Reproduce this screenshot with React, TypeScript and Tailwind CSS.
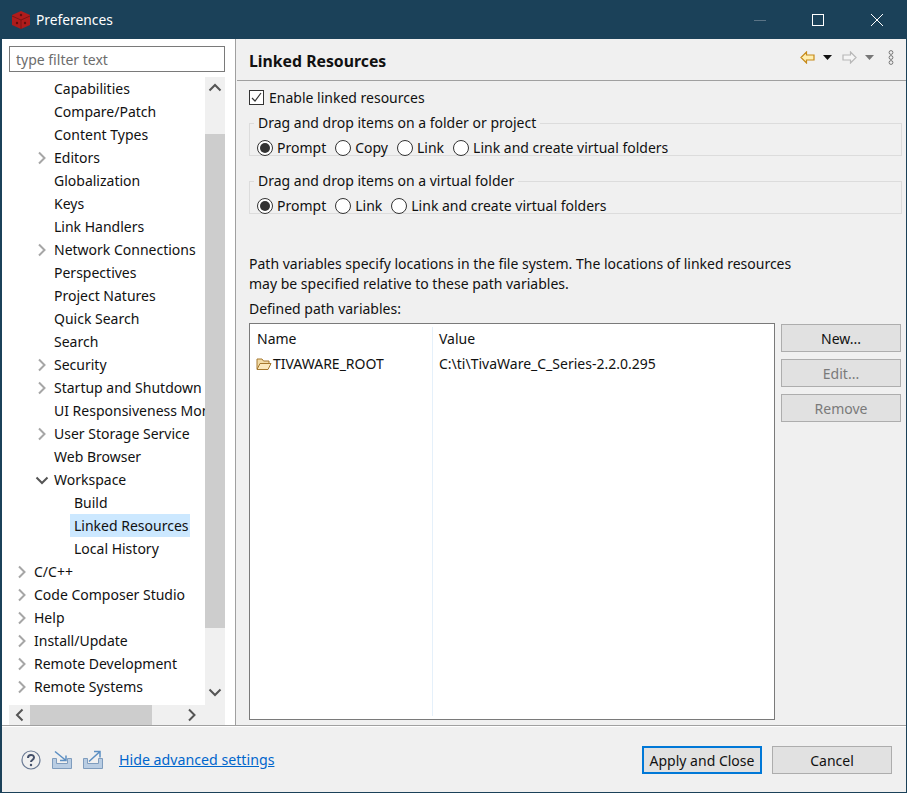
import { ReactNode } from "react";

type TreeRow = { label: string; level: number; arrow?: "right" | "down"; selected?: boolean };

const treeRows: TreeRow[] = [
    { label: "Capabilities", level: 1 },
    { label: "Compare/Patch", level: 1 },
    { label: "Content Types", level: 1 },
    { label: "Editors", level: 1, arrow: "right" },
    { label: "Globalization", level: 1 },
    { label: "Keys", level: 1 },
    { label: "Link Handlers", level: 1 },
    { label: "Network Connections", level: 1, arrow: "right" },
    { label: "Perspectives", level: 1 },
    { label: "Project Natures", level: 1 },
    { label: "Quick Search", level: 1 },
    { label: "Search", level: 1 },
    { label: "Security", level: 1, arrow: "right" },
    { label: "Startup and Shutdown", level: 1, arrow: "right" },
    { label: "UI Responsiveness Monitoring", level: 1 },
    { label: "User Storage Service", level: 1, arrow: "right" },
    { label: "Web Browser", level: 1 },
    { label: "Workspace", level: 1, arrow: "down" },
    { label: "Build", level: 2 },
    { label: "Linked Resources", level: 2, selected: true },
    { label: "Local History", level: 2 },
    { label: "C/C++", level: 0, arrow: "right" },
    { label: "Code Composer Studio", level: 0, arrow: "right" },
    { label: "Help", level: 0, arrow: "right" },
    { label: "Install/Update", level: 0, arrow: "right" },
    { label: "Remote Development", level: 0, arrow: "right" },
    { label: "Remote Systems", level: 0, arrow: "right" }
];

const Chevron = ({ dir, color = "#a6a6a6" }: { dir: "right" | "down" | "left" | "up"; color?: string }) => {
    const points = {
        right: "4,1.5 9.500,7 4,12.500",
        left: "9.500,1.5 4,7 9.500,12.500",
        down: "1.5,4.500 7,10 12.500,4.500",
        up: "1.5,9.500 7,4 12.500,9.500"
    }[dir];
    return (
        <svg width="14" height="14" viewBox="0 0 14 14" fill="none">
            <polyline points={points} stroke={color} strokeWidth="2" />
        </svg>
    );
};

const Radio = ({ label, checked }: { label: string; checked?: boolean }) => (
    <label className="flex items-center gap-[4px]">
        <span className="flex h-[16px] w-[16px] items-center justify-center rounded-full border border-[#333] bg-white">
            {checked && <span className="h-[10px] w-[10px] rounded-full bg-[#333]" />}
        </span>
        <span>{label}</span>
    </label>
);

const Group = ({ title, children }: { title: string; children: ReactNode }) => (
    <fieldset className="mr-[4px] h-[42px] border border-[#dcdcdc] pl-[7px]">
        <legend className="-ml-[3px] px-[4px] leading-[18px]">{title}</legend>
        <div className="mt-[5px] flex gap-[9px]">{children}</div>
    </fieldset>
);

const SideButton = ({ label, disabled }: { label: string; disabled?: boolean }) => (
    <button
        className={
            "h-[28px] w-[120px] border border-[#adadad] bg-[#e1e1e1] " +
            (disabled ? "text-[#7a7a7a]" : "text-[#111]")
        }
    >
        {label}
    </button>
);

const ImportIcon = () => (
    <svg width="22" height="20" viewBox="0 0 22 20" fill="none">
        <path d="M1.500 8.500v10h19v-10h-4v5h-11v-5z" fill="#b9cde3" stroke="#7f9cbd" />
        <path d="M4 1.500l11 9M15 5.500v5h-6" stroke="#5b8ec2" strokeWidth="1.5" />
    </svg>
);

const ExportIcon = () => (
    <svg width="22" height="20" viewBox="0 0 22 20" fill="none">
        <path d="M1.500 8.500v10h19v-10h-4v5h-11v-5z" fill="#b9cde3" stroke="#7f9cbd" />
        <path d="M7 11.500L18 1.500M12 1.500h6v6" stroke="#5b8ec2" strokeWidth="1.5" />
    </svg>
);

const Tree = () => (
    <div className="w-[196px] shrink-0 overflow-hidden pb-[7px]">
        {treeRows.map(row => (
            <div key={row.label} className="relative h-[23px] leading-[23px] whitespace-nowrap">
                {row.arrow && (
                    <span
                        className={
                            row.level === 0
                                ? "absolute top-[5px] left-[6px]"
                                : "absolute top-[5px] left-[26px]"
                        }
                    >
                        <Chevron dir={row.arrow} color={row.arrow === "down" ? "#555" : "#a6a6a6"} />
                    </span>
                )}
                <span
                    className={
                        row.level === 0
                            ? "ml-[25px]"
                            : row.level === 1
                              ? "ml-[45px]"
                              : row.selected
                                ? "ml-[61px] inline-block bg-[#cce8ff] pr-[2px] pl-[4px]"
                                : "ml-[65px]"
                    }
                >
                    {row.label}
                </span>
            </div>
        ))}
    </div>
);

export default function App() {
    return (
        <div
            className="flex h-[793px] w-[907px] flex-col border-t border-r border-b border-l-2 border-[#1b4159] bg-[#f0f0f0] text-[14px] text-[#111]"
            style={{ fontFamily: '"Noto Sans", sans-serif' }}
        >
            {/* title bar */}
            <header className="flex h-[38px] shrink-0 items-center bg-[#1b4159] text-white">
                <svg className="ml-[9px]" width="20" height="20" viewBox="0 0 20 20">
                    <path d="M10 1l9 4v10l-9 4-9-4V5z" fill="#b01c1c" />
                    <path d="M1 6l9 4 9-4M10 10v9" stroke="#7a1414" strokeWidth="1" fill="none" />
                    <circle cx="10" cy="5" r="1.2" fill="#5e1010" />
                    <circle cx="6" cy="13" r="1.2" fill="#5e1010" />
                    <circle cx="14" cy="13" r="1.2" fill="#5e1010" />
                </svg>
                <span className="ml-[5px] pt-px text-[13.8px]">Preferences</span>
                <div className="ml-auto flex items-center">
                    <span className="mr-[46px] h-px w-[12px] bg-[#5b7486]" />
                    <span className="mr-[47px] h-[12px] w-[12px] border border-white" />
                    <svg className="mr-[23px]" width="12" height="12" viewBox="0 0 12 12">
                        <path d="M0 0l12 12M12 0L0 12" stroke="#fff" strokeWidth="1" />
                    </svg>
                </div>
            </header>

            <div className="flex h-[687px] shrink-0 border-b border-[#a0a0a0]">
                {/* left side */}
                <aside className="flex w-[233px] shrink-0 flex-col bg-white px-[7px]">
                    <input
                        readOnly
                        placeholder="type filter text"
                        className="mt-[7px] h-[26px] w-[216px] shrink-0 border border-[#7a7a7a] px-[6px] placeholder:text-[#6d6d6d]"
                    />
                    <div className="mt-[5px] flex flex-1 flex-col overflow-hidden">
                        <div className="flex min-h-0 flex-1">
                            <Tree />
                            <div className="flex w-[20px] shrink-0 flex-col bg-[#f0f0f0]">
                                <div className="flex h-[57px] shrink-0 justify-center pt-[4px]">
                                    <Chevron dir="up" color="#555" />
                                </div>
                                <div className="h-[494px] shrink-0 bg-[#cdcdcd]" />
                                <div className="flex flex-1 items-end justify-center pb-[6px]">
                                    <Chevron dir="down" color="#555" />
                                </div>
                            </div>
                        </div>
                        <div className="flex h-[20px] w-[216px] shrink-0 bg-[#f0f0f0]">
                            <div className="flex w-[21px] shrink-0 items-center justify-center">
                                <Chevron dir="left" color="#555" />
                            </div>
                            <div className="h-full w-[122px] bg-[#cdcdcd]" />
                            <div className="ml-[33px] flex items-center">
                                <Chevron dir="right" color="#555" />
                            </div>
                        </div>
                    </div>
                </aside>

                {/* right side */}
                <main className="flex min-w-0 flex-1 flex-col border-l border-[#a0a0a0] pl-[1px]">
                    <div className="flex h-[42px] shrink-0 items-center border-b border-[#a0a0a0] pl-[12px]">
                        <h1 className="pt-[5px] text-[15.8px] font-bold">Linked Resources</h1>
                        <div className="ml-auto flex items-center pb-[5px]">
                            <svg width="15" height="13" viewBox="0 0 15 13">
                                <path d="M1 6.500L6.500 1v3H14v5H6.500v3z" fill="#ffeeb0" stroke="#c68a1a" strokeWidth="1.2" />
                            </svg>
                            <svg className="ml-[8px]" width="9" height="5" viewBox="0 0 9 5">
                                <path d="M0 0h9L4.500 5z" fill="#111" />
                            </svg>
                            <svg className="ml-[10px]" width="15" height="13" viewBox="0 0 15 13">
                                <path d="M14 6.500L8.500 1v3H1v5h7.500v3z" fill="#f5f5f5" stroke="#b8b8b8" strokeWidth="1.2" />
                            </svg>
                            <svg className="ml-[8px]" width="9" height="5" viewBox="0 0 9 5">
                                <path d="M0 0h9L4.500 5z" fill="#777" />
                            </svg>
                            <svg className="mr-[12px] ml-[14px]" width="6" height="15" viewBox="0 0 6 15" fill="none">
                                <circle cx="3" cy="2.500" r="1.900" stroke="#777" />
                                <circle cx="3" cy="7.500" r="1.900" stroke="#777" />
                                <circle cx="3" cy="12.500" r="1.900" stroke="#777" />
                            </svg>
                        </div>
                    </div>

                    <div className="flex min-h-0 flex-1 flex-col pl-[12px]">
                        <label className="mt-[6px] flex h-[20px] items-center gap-[5px]">
                            <span className="flex h-[15px] w-[15px] items-center justify-center border border-[#333] bg-white">
                                <svg width="11" height="11" viewBox="0 0 11 11" fill="none">
                                    <path d="M1 6l3 3 6-8" stroke="#333" strokeWidth="1.2" />
                                </svg>
                            </span>
                            Enable linked resources
                        </label>
                        <div className="mt-[7px] flex flex-col gap-[16px]">
                            <Group title="Drag and drop items on a folder or project">
                                <Radio label="Prompt" checked />
                                <Radio label="Copy" />
                                <Radio label="Link" />
                                <Radio label="Link and create virtual folders" />
                            </Group>
                            <Group title="Drag and drop items on a virtual folder">
                                <Radio label="Prompt" checked />
                                <Radio label="Link" />
                                <Radio label="Link and create virtual folders" />
                            </Group>
                        </div>

                        <p className="mt-[40px] w-[560px] leading-[20px]">
                            Path variables specify locations in the file system. The locations of linked resources may be specified relative to these path variables.
                        </p>
                        <p className="mt-[5px] leading-[20px]">Defined path variables:</p>

                        <div className="mt-[4px] flex h-[397px] gap-[6px]">
                            <div className="flex w-[526px] shrink-0 border border-[#7a7a7a] bg-white py-[3px]">
                                <div className="w-[183px] shrink-0 border-r border-[#e5f0fa] pl-[7px]">
                                    <div className="h-[24px] leading-[24px]">Name</div>
                                    <div className="-ml-px flex h-[25px] items-center gap-[1px] leading-[25px]">
                                        <svg width="16" height="14" viewBox="0 0 16 14">
                                            <path d="M1 12V2h5l1.500 2H13v3" fill="#f3dda8" stroke="#a6792e" />
                                            <path d="M1 12.500L4 6.500h11l-3 6z" fill="#fbe9bd" stroke="#a6792e" />
                                        </svg>
                                        TIVAWARE_ROOT
                                    </div>
                                </div>
                                <div className="flex-1 pl-[6px]">
                                    <div className="h-[24px] leading-[24px]">Value</div>
                                    <div className="h-[25px] leading-[25px]">C:\ti\TivaWare_C_Series-2.2.0.295</div>
                                </div>
                            </div>
                            <div className="flex flex-col gap-[7px] pt-[1px]">
                                <SideButton label="New..." />
                                <SideButton label="Edit..." disabled />
                                <SideButton label="Remove" disabled />
                            </div>
                        </div>
                    </div>
                </main>
            </div>

            {/* footer */}
            <footer className="flex min-h-0 flex-1 items-center border-t border-white pr-[14px] pl-[19px]">
                <svg width="20" height="20" viewBox="0 0 20 20" fill="none">
                    <circle cx="10" cy="10" r="9" stroke="#6a7a94" strokeWidth="1.2" />
                    <path d="M7 8c0-4 6-4 6-.5 0 2.500-3 2.500-3 4.500" stroke="#44506a" strokeWidth="2" />
                    <circle cx="10" cy="15" r="1.2" fill="#44506a" />
                </svg>
                <span className="ml-[10px]">
                    <ImportIcon />
                </span>
                <span className="ml-[9px]">
                    <ExportIcon />
                </span>
                <a className="ml-[15px] pt-px text-[14.2px] text-[#0066cc] underline">Hide advanced settings</a>
                <button className="ml-auto h-[28px] w-[120px] border-2 border-[#0078d7] bg-[#e1e1e1] pt-px">
                    Apply and Close
                </button>
                <button className="ml-[10px] h-[28px] w-[120px] border border-[#adadad] bg-[#e1e1e1] pt-px">
                    Cancel
                </button>
            </footer>
        </div>
    );
}
